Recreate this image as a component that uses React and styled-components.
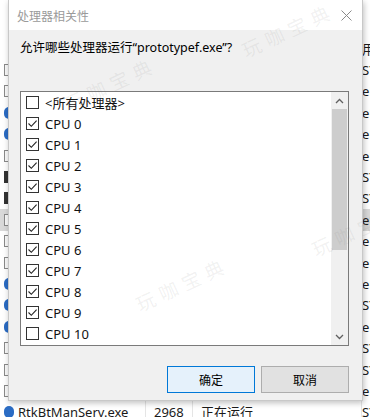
import React from "react";
import styled, { createGlobalStyle } from "styled-components";

const GlobalStyle = createGlobalStyle`
  html, body {
    margin: 0;
    padding: 0;
    background: #ffffff;
  }
  body {
    font-family: "Noto Sans", "Noto Sans CJK SC", sans-serif;
  }
`;

const Screen = styled.div`
  position: relative;
  width: 370px;
  height: 417px;
  overflow: hidden;
  background: #ffffff;
`;

// task manager list behind the dialog
const BackList = styled.div`
  display: grid;
  grid-template-columns: 1fr 8px;
  padding-top: 38px;
`;

const BackMain = styled.div`
  display: flex;
  flex-direction: column;
`;

const BackRow = styled.div`
  display: grid;
  grid-template-columns: 146px 47px 1fr;
  height: 21.4px;
  align-items: center;
  font-size: 13px;
  line-height: 16px;
  color: #1a1a1a;
  background: ${(p) => (p.$selected ? "#d9d9d9" : "transparent")};
  white-space: nowrap;
  overflow: hidden;
`;

const BackName = styled.div`
  display: flex;
  align-items: center;
  gap: 4px;
  padding-left: 4px;
  border-right: 1px solid #e5e5e5;
  height: 100%;
`;

const BackIcon = styled.span`
  width: 10px;
  height: 12px;
  flex: none;
  box-sizing: border-box;
  border: ${(p) => (p.$kind === "box" ? "1px solid #8a8a8a" : "none")};
  background: ${(p) =>
    p.$kind === "blue" ? "#2b6cc4" : p.$kind === "dark" ? "#333" : "#fafafa"};
  border-radius: ${(p) => (p.$kind === "blue" ? "5px" : "0")};
`;

const BackCell = styled.div`
  padding-left: 8px;
  border-right: 1px solid #e5e5e5;
  height: 100%;
  display: flex;
  align-items: center;
`;

const BackUsers = styled.div`
  display: flex;
  flex-direction: column;
  overflow: hidden;
`;

const BackUser = styled.div`
  height: 21.4px;
  display: flex;
  align-items: center;
  font-size: 13px;
  line-height: 16px;
  color: #1a1a1a;
  white-space: nowrap;
  background: ${(p) => (p.$selected ? "#d9d9d9" : "transparent")};
`;

// dialog window
const Dialog = styled.div`
  position: absolute;
  left: 8px;
  top: 0;
  width: 353px;
  height: 400px;
  display: flex;
  flex-direction: column;
  background: #f0f0f0;
  border: 1px solid #c8c8c8;
  border-top: none;
  box-shadow: 1px 2px 6px rgba(0, 0, 0, 0.25);
`;

const TitleBar = styled.div`
  height: 30px;
  display: flex;
  align-items: center;
  justify-content: space-between;
  padding: 0 10px 0 8px;
  background: #ffffff;
`;

const Title = styled.span`
  font-size: 12px;
  color: #9a9a9a;
  font-family: "Noto Sans CJK SC", sans-serif;
`;

const Close = styled.svg`
  width: 11px;
  height: 11px;
`;

const Body = styled.div`
  flex: 1;
  display: flex;
  flex-direction: column;
  padding: 10px 13px 0 11px;
`;

const Prompt = styled.div`
  font-size: 12.5px;
  color: #000;
  font-family: "Noto Sans", "Noto Sans CJK SC", sans-serif;
  line-height: 16px;
`;

const ListBox = styled.div`
  margin-top: 35px;
  height: 255px;
  box-sizing: border-box;
  border: 1px solid #7a7a7a;
  background: #ffffff;
  display: flex;
`;

const Items = styled.div`
  flex: 1;
  display: flex;
  flex-direction: column;
`;

const Item = styled.label`
  height: 21px;
  display: flex;
  align-items: center;
  gap: 6px;
  padding-left: 5px;
  font-size: 13px;
  color: #111;
  font-family: "Noto Sans", "Noto Sans CJK SC", sans-serif;
`;

const Box = styled.span`
  width: 13px;
  height: 13px;
  box-sizing: border-box;
  border: 1px solid #333;
  background: #fff;
  display: flex;
  align-items: center;
  justify-content: center;
  flex: none;
`;

const Scrollbar = styled.div`
  width: 17px;
  background: #f0f0f0;
  display: flex;
  flex-direction: column;
  align-items: center;
`;

const Arrow = styled.div`
  height: 17px;
  width: 17px;
  display: flex;
  align-items: center;
  justify-content: center;
`;

const Thumb = styled.div`
  width: 15px;
  height: 141px;
  background: #cdcdcd;
`;

const Track = styled.div`
  flex: 1;
`;

const Buttons = styled.div`
  display: flex;
  justify-content: flex-end;
  gap: 6px;
  margin-top: 20px;
`;

const Button = styled.button`
  width: 88px;
  height: 27px;
  box-sizing: border-box;
  font-size: 12px;
  font-family: "Noto Sans CJK SC", sans-serif;
  color: #000;
  background: ${(p) => (p.$primary ? "#e5f1fb" : "#e1e1e1")};
  border: 1px solid ${(p) => (p.$primary ? "#0078d7" : "#adadad")};
  padding: 0;
`;

const Watermark = styled.div`
  position: absolute;
  left: ${(p) => p.$x}px;
  top: ${(p) => p.$y}px;
  font-size: 19px;
  letter-spacing: 6px;
  color: rgba(120, 120, 120, 0.1);
  transform: rotate(-25deg);
  font-family: "Noto Sans CJK SC", sans-serif;
  pointer-events: none;
  white-space: nowrap;
`;

const backRows = [
  { icon: "box", user: "SYSTEM" },
  { icon: "box", user: "eM" },
  { icon: "blue", user: "eM" },
  { icon: "blue", user: "eM" },
  { icon: "box", user: "eM" },
  { icon: "dark", user: "SYSTEM" },
  { icon: "dark", user: "SYSTEM" },
  { icon: "box", user: "eM", selected: true },
  { icon: "box", user: "eM" },
  { icon: "box", user: "eM" },
  { icon: "blue", user: "eM" },
  { icon: "blue", user: "SYSTEM" },
  { icon: "blue", user: "eM" },
  { icon: "box", user: "SYSTEM" },
  { icon: "box", user: "SYSTEM" },
  { icon: "box", user: "eM" },
];

const cpus = [
  { label: "<所有处理器>", on: false },
  ...Array.from({ length: 11 }, (_, i) => ({ label: `CPU ${i}`, on: i < 10 })),
];

function Check() {
  return (
    <svg width="11" height="11" viewBox="0 0 11 11">
      <path d="M1.5 5.5 L4.3 8.3 L9.6 2.6" fill="none" stroke="#222" strokeWidth="1.1" />
    </svg>
  );
}

export default function App() {
  return (
    <Screen>
      <GlobalStyle />
      <BackList>
        <BackMain>
          <BackRow>
            <BackName />
            <BackCell />
            <BackCell />
          </BackRow>
          {backRows.map((r, i) => (
            <BackRow key={i} $selected={r.selected}>
              <BackName>
                <BackIcon $kind={r.icon} />
              </BackName>
              <BackCell />
              <BackCell />
            </BackRow>
          ))}
          <BackRow>
            <BackName>
              <BackIcon $kind="blue" />
              RtkBtManServ.exe
            </BackName>
            <BackCell>2968</BackCell>
            <BackCell>正在运行</BackCell>
          </BackRow>
        </BackMain>
        <BackUsers>
          <BackUser>用户名</BackUser>
          {backRows.map((r, i) => (
            <BackUser key={i} $selected={r.selected}>
              {r.user}
            </BackUser>
          ))}
          <BackUser>SYSTEM</BackUser>
        </BackUsers>
      </BackList>

      <Dialog>
        <TitleBar>
          <Title>处理器相关性</Title>
          <Close viewBox="0 0 11 11">
            <path d="M0.5 0.5 L10.5 10.5 M10.5 0.5 L0.5 10.5" stroke="#8a8a8a" strokeWidth="1" />
          </Close>
        </TitleBar>
        <Body>
          <Prompt>允许哪些处理器运行“prototypef.exe”?</Prompt>
          <ListBox>
            <Items>
              {cpus.map((c) => (
                <Item key={c.label}>
                  <Box>{c.on && <Check />}</Box>
                  {c.label}
                </Item>
              ))}
            </Items>
            <Scrollbar>
              <Arrow>
                <svg width="9" height="6" viewBox="0 0 9 6">
                  <path d="M1 5 L4.5 1.5 L8 5" fill="none" stroke="#606060" strokeWidth="1.3" />
                </svg>
              </Arrow>
              <Thumb />
              <Track />
              <Arrow>
                <svg width="9" height="6" viewBox="0 0 9 6">
                  <path d="M1 1 L4.5 4.5 L8 1" fill="none" stroke="#606060" strokeWidth="1.3" />
                </svg>
              </Arrow>
            </Scrollbar>
          </ListBox>
          <Buttons>
            <Button $primary>确定</Button>
            <Button>取消</Button>
          </Buttons>
        </Body>
      </Dialog>

      <Watermark $x={238} $y={16}>玩咖宝典</Watermark>
      <Watermark $x={60} $y={70}>玩咖宝典</Watermark>
      <Watermark $x={308} $y={215}>玩咖宝典</Watermark>
      <Watermark $x={132} $y={270}>玩咖宝典</Watermark>
    </Screen>
  );
}
